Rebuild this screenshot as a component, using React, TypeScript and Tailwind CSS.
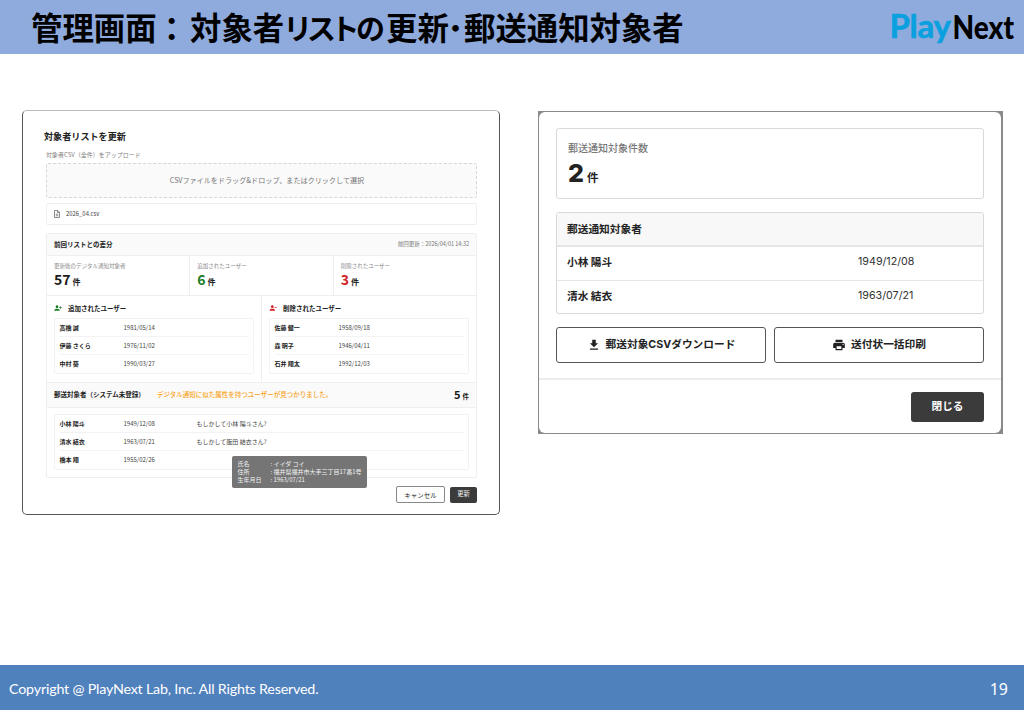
import type { ReactNode } from "react";
import { MdDownload, MdPrint, MdPersonAdd, MdPersonRemove } from "react-icons/md";

type Person = { name: string; birth: string; hint?: string };

const added: Person[] = [
  { name: "高橋 誠", birth: "1981/05/14" },
  { name: "伊藤 さくら", birth: "1976/11/02" },
  { name: "中村 葵", birth: "1990/03/27" },
];

const removed: Person[] = [
  { name: "佐藤 健一", birth: "1958/09/18" },
  { name: "森 明子", birth: "1946/04/11" },
  { name: "石井 翔太", birth: "1992/12/03" },
];

const mailing: Person[] = [
  { name: "小林 陽斗", birth: "1949/12/08", hint: "もしかして小林 陽斗さん?" },
  { name: "清水 結衣", birth: "1963/07/21", hint: "もしかして飯田 結衣さん?" },
  { name: "橋本 翔", birth: "1955/02/26" },
];

function PersonRows({ people }: { people: Person[] }) {
  return (
    <div className="rounded-[2px] border border-[#f2f2f2] pl-[4.500px] pr-[4px]">
      {people.map((p) => (
        <div
          key={p.name}
          className="flex h-[18px] items-center border-b border-[#f3f3f3] text-[6px] text-[#444] last:border-b-0"
        >
          <span className="w-[64px] font-bold text-[#222]">{p.name}</span>
          <span className="w-[73px]">{p.birth}</span>
          {p.hint && <span>{p.hint}</span>}
        </div>
      ))}
    </div>
  );
}

function Stat({ label, value, color }: { label: string; value: string; color: string }) {
  return (
    <div className="flex flex-1 flex-col border-r border-[#efefef] pl-[7px] pt-[8px] last:border-r-0">
      <span className="text-[5.5px] text-[#8a8a8a]">{label}</span>
      <span className="mt-[2px] flex items-baseline gap-[2px] font-bold">
        <span className={`text-[14px] ${color}`}>{value}</span>
        <span className="text-[8px] text-[#222]">件</span>
      </span>
    </div>
  );
}

function UserGroup({ icon, title, people }: { icon: ReactNode; title: string; people: Person[] }) {
  return (
    <div className="flex-1 border-r border-[#efefef] pl-[7px] pr-[7px] last:border-r-0">
      <div className="flex h-[22px] items-center pt-[2px] text-[6.5px] font-bold text-[#222]">
        <span className="w-[14px]">{icon}</span>
        {title}
      </div>
      <PersonRows people={people} />
    </div>
  );
}

function Tooltip() {
  const rows = [
    ["氏名", ": イイダ コイ"],
    ["住所", ": 福井県福井市大手三丁目17番1号"],
    ["生年月日", ": 1963/07/21"],
  ];
  return (
    <div className="absolute left-[209px] top-[345px] flex h-[32px] w-[135px] flex-col justify-center rounded-[2px] bg-[#757575] pl-[5.500px] text-[6px] text-[#f2f2f2]">
      {rows.map(([k, v]) => (
        <div key={k} className="flex h-[7.6px] items-center">
          <span className="w-[33px]">{k}</span>
          <span>{v}</span>
        </div>
      ))}
    </div>
  );
}

function UpdateDialog() {
  return (
    <section className="relative mt-[56px] h-[405px] w-[478px] rounded-[5px] border border-[#555] border-t-[#bbb] bg-white pl-[23px] pr-[22px]">
      <h2 className="-ml-[2px] pt-[20.500px] text-[9.1px] font-bold text-[#222]">対象者リストを更新</h2>
      <p className="mt-[11.500px] text-[6px] text-[#808080]">対象者CSV（全件）をアップロード</p>
      <div className="mt-[5px] flex h-[35px] items-center justify-center rounded-[2px] border border-dashed border-[#d6d6d6] bg-[#fafafa] pl-[11px] text-[7.1px] text-[#757575]">
        CSVファイルをドラッグ&amp;ドロップ、またはクリックして選択
      </div>
      <div className="mt-[5px] flex h-[22px] items-center rounded-[2px] border border-[#efefef] pl-[7px] text-[5.9px] text-[#444]">
        <svg className="mr-[6px] h-[8px] w-[6px]" viewBox="0 0 12 16" fill="none" stroke="#666" strokeWidth="1.5">
          <path d="M1 1h6.500L11 4.500V15H1zM7 1v4h4M3.500 8.500h5M3.500 11.500h5" />
        </svg>
        2026_04.csv
      </div>
      <div className="mt-[8px] h-[245px] rounded-[2px] border border-[#efefef]">
        <div className="flex h-[22px] items-center justify-between border-b border-[#efefef] bg-[#fafafa] pl-[7px] pr-[7px]">
          <span className="text-[6.5px] font-bold text-[#222]">前回リストとの差分</span>
          <span className="text-[5.5px] text-[#777]">前回更新：2026/04/01 14:32</span>
        </div>
        <div className="flex h-[40px] border-b border-[#efefef]">
          <Stat label="更新後のデジタル通知対象者" value="57" color="text-[#1a1a1a]" />
          <Stat label="追加されたユーザー" value="6" color="text-[#1b7d28]" />
          <Stat label="削除されたユーザー" value="3" color="text-[#d31f26]" />
        </div>
        <div className="flex h-[86px]">
          <UserGroup
            icon={<MdPersonAdd className="h-[8px] w-[8px] -scale-x-100 text-[#1b7d28]" />}
            title="追加されたユーザー"
            people={added}
          />
          <UserGroup
            icon={<MdPersonRemove className="h-[8px] w-[8px] text-[#d31f26]" />}
            title="削除されたユーザー"
            people={removed}
          />
        </div>
        <div className="flex h-[26px] items-center border-y border-[#efefef] bg-[#fafafa] pb-[2px] pl-[7px] pr-[7px] text-[6.5px]">
          <span className="w-[103px] font-bold text-[#222]">郵送対象者（システム未登録）</span>
          <span className="font-medium text-[#f9a31a]">デジタル通知に似た属性を持つユーザーが見つかりました。</span>
          <span className="ml-auto flex items-baseline gap-[2px] font-bold text-[#1a1a1a]">
            <span className="text-[11px]">5</span>
            <span className="text-[6.5px]">件</span>
          </span>
        </div>
        <div className="px-[7px] pt-[6px]">
          <PersonRows people={mailing} />
        </div>
      </div>
      <div className="mt-[8px] flex justify-end gap-[5px]">
        <button className="h-[17px] w-[49px] rounded-[2px] border border-[#888] bg-white pt-[2px] text-[6.5px] text-[#222]">
          キャンセル
        </button>
        <button className="mt-px h-[16px] w-[27px] rounded-[2px] bg-[#3b3b3b] pb-px text-[6.3px] text-[#eee]">
          更新
        </button>
      </div>
      <Tooltip />
    </section>
  );
}

function MailRow({ name, birth }: { name: string; birth: string }) {
  return (
    <div className="flex h-[33.500px] items-center border-b border-[#e6e6e6] pb-[2px] pl-[10px] last:border-b-0">
      <span className="w-[291px] text-[10.7px] font-bold text-[#222]">{name}</span>
      <span className="font-[Inter] text-[10.7px] text-[#333]">{birth}</span>
    </div>
  );
}

function MailingDialog() {
  return (
    <section className="mt-[57px] h-[323px] w-[465px] bg-[#8a8a8a] pb-px pl-px pr-[2px] pt-px">
      <div className="h-full rounded-[6px] bg-white">
        <div className="h-[268px] border-b-2 border-[#ececec] pl-[17px] pr-[17px] pt-[16px]">
          <div className="h-[71px] rounded-[3px] border border-[#d9d9d9] pl-[11px] pt-[14px]">
            <p className="text-[10px] font-medium text-[#777]">郵送通知対象件数</p>
            <p className="mt-[8px] flex items-baseline gap-[3px] font-bold text-[#222]">
              <span className="font-[Inter] text-[25px] font-extrabold">2</span>
              <span className="text-[11.5px]">件</span>
            </p>
          </div>
          <div className="mt-[13px] h-[102px] overflow-hidden rounded-[3px] border border-[#d9d9d9]">
            <div className="flex h-[34px] items-center border-b-2 border-[#e6e6e6] bg-[#f8f8f8] pl-[10px] text-[10.7px] font-bold text-[#222]">
              郵送通知対象者
            </div>
            <MailRow name="小林 陽斗" birth="1949/12/08" />
            <MailRow name="清水 結衣" birth="1963/07/21" />
          </div>
          <div className="mt-[13px] flex gap-[8px] font-[Inter,'Noto_Sans_CJK_JP',sans-serif] text-[10.7px] font-bold text-[#222]">
            <button className="flex h-[36px] flex-1 items-center justify-center gap-[5px] rounded-[3px] border border-[#555]">
              <MdDownload className="h-[14px] w-[14px]" />
              <span>郵送対象CSVダウンロード</span>
            </button>
            <button className="flex h-[36px] flex-1 items-center justify-center gap-[5px] rounded-[3px] border border-[#555]">
              <MdPrint className="h-[14px] w-[14px]" />
              <span>送付状一括印刷</span>
            </button>
          </div>
        </div>
        <div className="flex justify-end pr-[17px] pt-[12px]">
          <button className="h-[30px] w-[73px] rounded-[3px] bg-[#3b3b3b] pb-[2px] text-[10.7px] font-bold text-white">
            閉じる
          </button>
        </div>
      </div>
    </section>
  );
}

export default function App() {
  return (
    <div className="flex h-[710px] w-[1024px] flex-col overflow-hidden whitespace-nowrap bg-white font-['Noto_Sans_CJK_JP',sans-serif] leading-none">
      <header className="flex h-[54px] shrink-0 items-center justify-between bg-[#8faadc] pl-[31px] pr-[10px]">
        <h1 className="flex items-center text-[31.4px] font-bold text-black">
          <span className="w-[125px]">管理画面</span>
          <span className="w-[34px] pt-[2px]">：</span>
          <span className="w-[94px]">対象者</span>
          <span className="w-[102px] pl-[1px] text-[29px] tracking-[-1.8px] [font-feature-settings:'palt']">
            リストの
          </span>
          <span className="w-[63px]">更新</span>
          <span className="w-[15px] text-[26px] [font-feature-settings:'palt']">・</span>
          <span>郵送通知対象者</span>
        </h1>
        <div className="flex items-baseline pb-[3px] font-[Lato,sans-serif] font-bold">
          <span className="text-[33px] tracking-[-0.3px] text-[#0aa0e0] [-webkit-text-stroke:0.6px_#0aa0e0]">Play</span>
          <span className="ml-[2px] inline-block origin-[50%_75%] scale-y-[1.13] text-[28px] font-black text-black">
            Next
          </span>
        </div>
      </header>
      <main className="flex h-[611px] shrink-0 items-start pl-[22px]">
        <UpdateDialog />
        <div className="w-[38px]" />
        <MailingDialog />
      </main>
      <footer className="flex h-[45px] items-center justify-between bg-[#4f81bd] pl-[9px] pr-[16px] pt-[2px] text-white">
        <span className="pt-[2px] font-[Lato,sans-serif] text-[14.3px] tracking-[-0.2px]">
          Copyright @ PlayNext Lab, Inc. All Rights Reserved.
        </span>
        <span className="font-['Noto_Sans',sans-serif] text-[16px]">19</span>
      </footer>
    </div>
  );
}
